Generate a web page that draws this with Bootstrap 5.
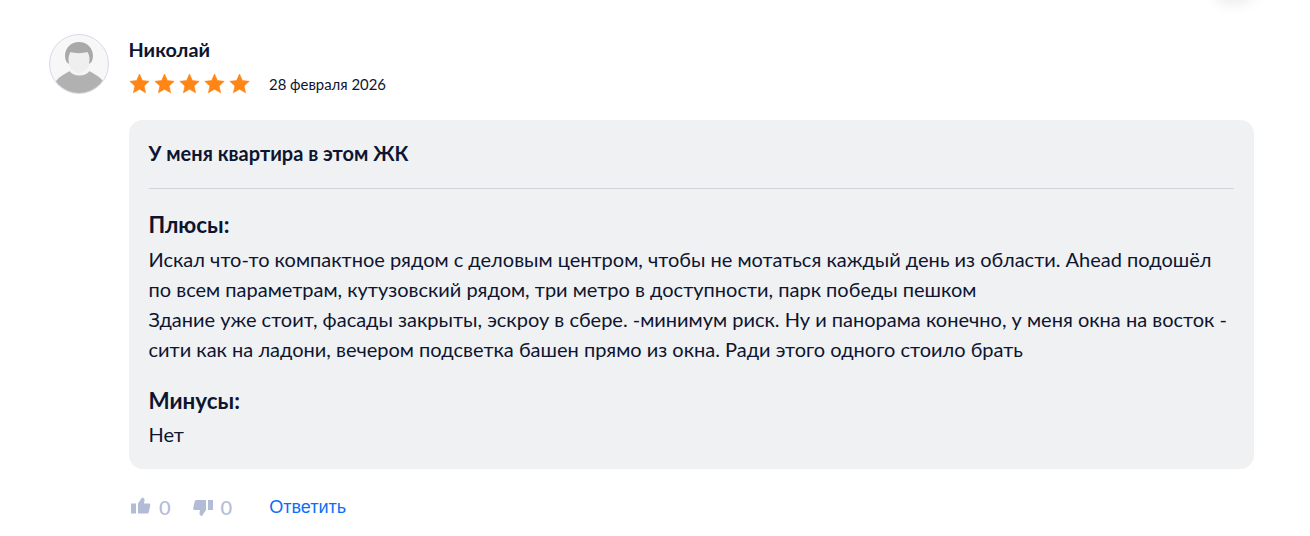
<!DOCTYPE html>
<html lang="ru">
<head>
  <meta charset="UTF-8">
  <title>Отзыв</title>
  <link href="https://cdn.jsdelivr.net/npm/bootstrap@5.3.0/dist/css/bootstrap.min.css" rel="stylesheet">
  <style>
    body { font-family: Lato, "Noto Sans", sans-serif; color: #0d1530; background: #fff; overflow: hidden; height: 536px; }
    .review-wrap { padding: 34px 56px 0 49px; }
    .review-ava { width: 60px; height: 60px; flex: none; border-radius: 50%; border: 1px solid #d5daea; overflow: hidden; background: #f7f7f7; }
    .review-main { margin-left: 20px; flex: 1; min-width: 0; }
    .review-name { font-size: 19.8px; font-weight: 700; line-height: 32px; margin: -1px 0 1px -.5px; }
    .review-meta { height: 38px; margin-top: -1px; }
    .review-date { font-size: 14.9px; margin-left: 19px; }
    .review-box { background: #f0f1f3; border-radius: 14px; padding: 20px; margin-top: 17px; height: 349px; }
    .review-title { font-size: 20px; font-weight: 700; line-height: 28px; padding: 0 0 21px; margin-top: -1px; border-bottom: 1px solid #d3d4da; margin-bottom: 19px; text-indent: -.5px; }
    .review-head { font-size: 22.4px; font-weight: 700; line-height: 34px; margin: 0 0 2px -.5px; }
    .review-minus { margin-bottom: 1px; }
    .review-text { font-size: 20px; line-height: 30px; margin: 0 0 20px -.5px; }
    .review-foot { height: 76px; font-size: 20px; color: #b3bcd6; font-weight: 500; }
    .review-foot a { color: #0b6ef7; text-decoration: none; font-weight: 400; margin-left: 37px; font-size: 18px; font-family: "Liberation Sans", sans-serif; }
    .thumb-down { margin-left: 20px; }
    .corner-glow { position: absolute; top: -22px; left: 1214px; width: 40px; height: 22px; border-radius: 50%; box-shadow: 0 2px 16px rgba(0,0,0,.1); }
  </style>
</head>
<body>
<div class="corner-glow"></div>
<div class="review-wrap d-flex align-items-start">
  <div class="review-ava">
    <svg width="58" height="58" viewBox="0 0 58 58">
      <path d="M6 58V46c4-5 10-8 14-10 4 5 15 5 19 0 4 2 10 5 14 10v12z" fill="#b1b1b1"/>
      <path d="M20 35c4 6 15 6 19 0" fill="none" stroke="#f4f4f4" stroke-width="2"/>
      <path d="M29 8c-8 0-13 6-13 13 0 2 .5 4 1.500 5 1 6 5.500 12 11.500 12s10.500-6 11.500-12c1-1 1.500-3 1.500-5 0-7-5-13-13-13z" fill="#efefef"/>
      <path d="M29 7c-8 0-14 6-14 14 0 2 .5 4 1.500 6l2.500 2c-1-5-.5-9 1.500-12 4 1.500 12 1.500 17 0 2 3 2.500 7 1.500 12l2.500-2c1-2 1.500-4 1.500-6 0-8-6-14-14-14z" fill="#a9a9a9"/>
    </svg>
  </div>
  <div class="review-main">
    <div class="review-name">Николай</div>
    <div class="review-meta d-flex align-items-center">
      <svg width="121" height="22" viewBox="0 0 121 22" fill="#ff8514" stroke="#ff8514" stroke-width=".6" stroke-linejoin="round">
        <path id="st" d="M10.500 1L13.400 7.600L20.200 8.300L15.100 12.900L16.600 19.800L10.500 16.200L4.400 19.800L5.900 12.900L.8 8.300L7.600 7.600Z"/>
        <use href="#st" x="25"/><use href="#st" x="50"/><use href="#st" x="75"/><use href="#st" x="100"/>
      </svg>
      <span class="review-date">28 февраля 2026</span>
    </div>
    <div class="review-box">
      <div class="review-title">У меня квартира в этом ЖК</div>
      <div class="review-head">Плюсы:</div>
      <div class="review-text">Искал что-то компактное рядом с деловым центром, чтобы не мотаться каждый день из области. Ahead подошёл по всем параметрам, кутузовский рядом, три метро в доступности, парк победы пешком<br>Здание уже стоит, фасады закрыты, эскроу в сбере. -минимум риск. Ну и панорама конечно, у меня окна на восток - сити как на ладони, вечером подсветка башен прямо из окна. Ради этого одного стоило брать</div>
      <div class="review-head review-minus">Минусы:</div>
      <div class="review-text mb-0">Нет</div>
    </div>
    <div class="review-foot d-flex align-items-center">
      <svg width="22" height="20" viewBox="0 0 22 20" fill="#b3bcd6" class="me-2"><path d="M2 6.500h5V16.500H2zM9 6.500L13 .5c1.800 0 2.800 1.200 2.500 3L15 6.500h5c1 0 1.500.8 1.300 1.800l-1.500 6.700c-.2 1-1 1.500-1.800 1.500H9z"/></svg>
      <span>0</span>
      <svg width="22" height="20" viewBox="0 0 22 20" fill="#b3bcd6" class="me-2 thumb-down"><path d="M17 3h5v10h-5zM15 3v10l-4 6c-1.800 0-2.800-1.200-2.500-3l.5-3H3.500c-1 0-1.500-.8-1.300-1.800L3.700 4.500C3.900 3.500 4.700 3 5.500 3z"/></svg>
      <span>0</span>
      <a href="#">Ответить</a>
    </div>
  </div>
</div>
</body>
</html>
